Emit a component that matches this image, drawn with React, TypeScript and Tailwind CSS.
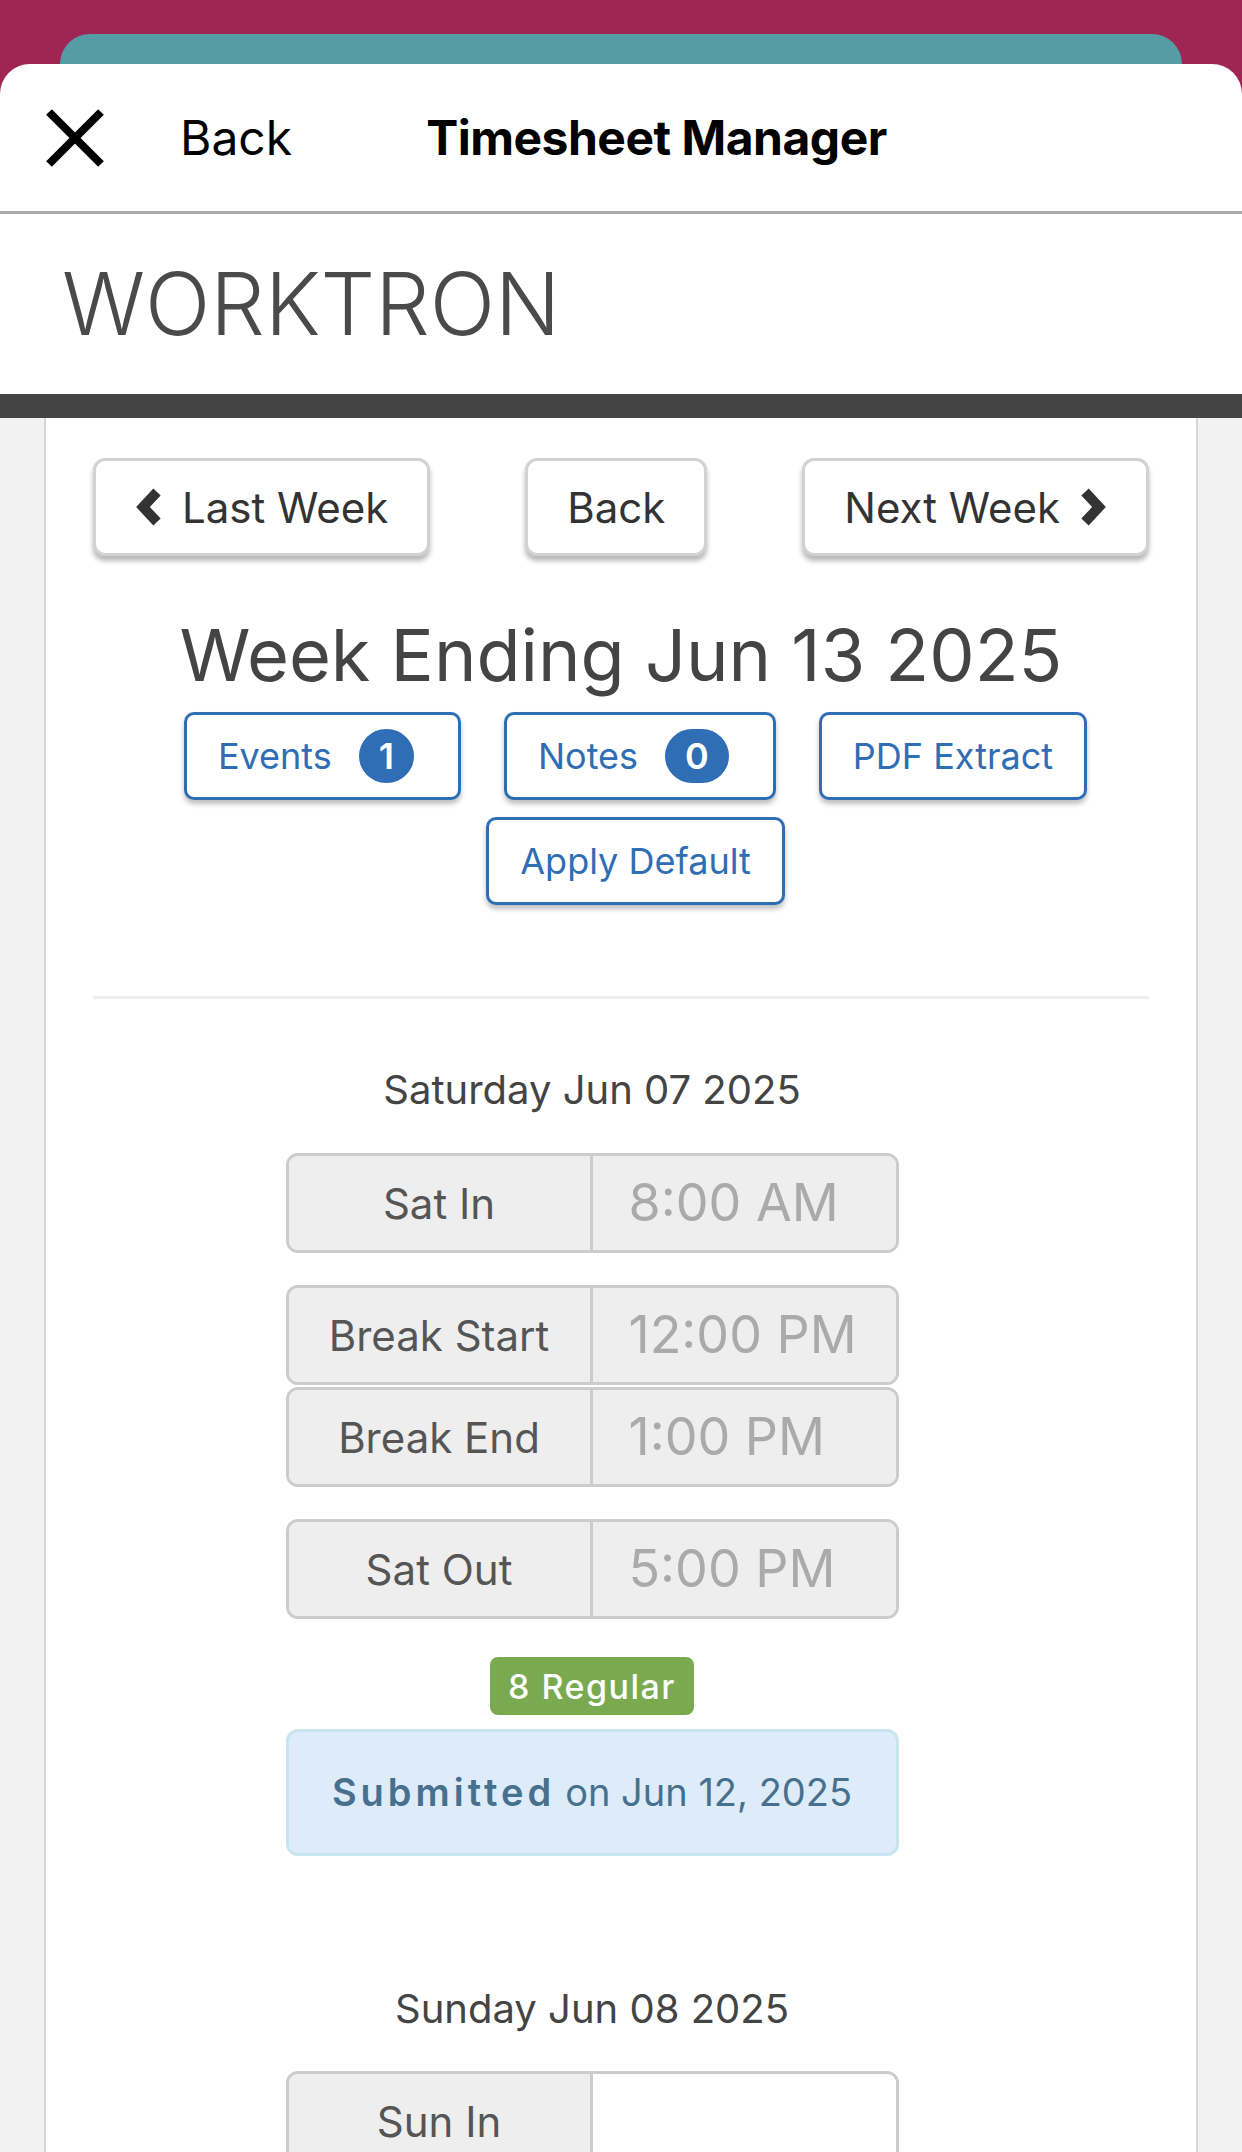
const rows = [
  { label: 'Sat In', value: '8:00 AM', gap: false },
  { label: 'Break Start', value: '12:00 PM', gap: true },
  { label: 'Break End', value: '1:00 PM', gap: false },
  { label: 'Sat Out', value: '5:00 PM', gap: true },
]

function Chevron({ dir }: { dir: 'left' | 'right' }) {
  return (
    <svg width="28" height="40" viewBox="0 0 28 40" className="shrink-0">
      <path
        d={dir === 'left' ? 'M22 5 L8 20 L22 35' : 'M6 5 L20 20 L6 35'}
        fill="none"
        stroke="#333333"
        strokeWidth="10"
        strokeLinejoin="miter"
      />
    </svg>
  )
}

function TimeRow({ label, value, blank }: { label: string; value?: string; blank?: boolean }) {
  return (
    <div className="flex h-[100px] w-[613px] shrink-0 overflow-hidden rounded-[12px] border-[3px] border-[#cccccc]">
      <div className="flex w-[304px] items-center justify-center border-r-[3px] border-[#cccccc] bg-[#eeeeee] text-[42px] text-[#555555]">
        {label}
      </div>
      <div className={`flex flex-1 items-center pl-[36px] text-[52px] text-[#aaaaaa] ${blank ? 'bg-white' : 'bg-[#eeeeee]'}`}>
        {value}
      </div>
    </div>
  )
}

function NavButton({ children }: { children: React.ReactNode }) {
  return (
    <button className="flex h-[98px] items-center gap-[19px] rounded-[12px] border-[3px] border-[#d2d2d2] bg-white px-[39px] text-[42px] text-[#333333] shadow-[0_5px_5px_rgba(0,0,0,0.28)]">
      {children}
    </button>
  )
}

function BlueButton({ label, count }: { label: string; count?: number }) {
  return (
    <button
      className={`flex h-[88px] items-center gap-[27px] rounded-[10px] border-[3px] border-[#2f6db5] bg-white pl-[31px] text-[36px] text-[#2f6db5] shadow-[0_4px_5px_rgba(0,0,0,0.25)] ${count === undefined ? 'pr-[31px]' : 'pr-[44px]'}`}
    >
      {label}
      {count !== undefined && (
        <span className="flex h-[54px] items-center justify-center rounded-full bg-[#2f6db5] px-[20px] text-[36px] font-semibold text-white">
          {count}
        </span>
      )}
    </button>
  )
}

export default function App() {
  return (
    <div className="h-[2152px] overflow-hidden bg-[#9f2653] pt-[34px] [font-family:Inter,sans-serif]">
      {/* stacked sheet behind */}
      <div className="mx-[60px] h-[30px] rounded-t-[30px] bg-[#559ca5]" />

      <div className="flex h-full flex-col rounded-t-[30px] bg-white">
        {/* modal header */}
        <div className="flex h-[147px] shrink-0 items-center pl-[45px] text-black">
          <svg width="60" height="60" viewBox="0 0 60 60" className="shrink-0">
            <path d="M4 4 L56 56 M56 4 L4 56" stroke="#000" strokeWidth="8" />
          </svg>
          <span className="ml-[75px] text-[48px]">Back</span>
          <span className="ml-[134px] text-[48px] font-bold tracking-[-0.5px]">Timesheet Manager</span>
        </div>
        <div className="h-[3px] shrink-0 bg-[#aaaaaa]" />

        <div className="flex h-[180px] shrink-0 items-center pl-[62px] text-[86px] font-light leading-none text-[#4a4a4a]">
          WORKTRON
        </div>
        <div className="h-[24px] shrink-0 bg-[#444444]" />

        <div className="flex-1 bg-[#f2f2f2]">
          <div className="mx-[44px] h-full border-x-[2px] border-[#d6d6d6] bg-white px-[47px] pt-[40px]">
            <div className="flex justify-between">
              <NavButton>
                <Chevron dir="left" />
                Last Week
              </NavButton>
              <NavButton>Back</NavButton>
              <NavButton>
                Next Week
                <Chevron dir="right" />
              </NavButton>
            </div>

            <h1 className="mt-[54px] text-center text-[72px] leading-[90px] text-[#444444]">
              Week Ending Jun 13 2025
            </h1>

            <div className="mt-[12px] flex justify-center gap-[43px] pl-[29px]">
              <BlueButton label="Events" count={1} />
              <BlueButton label="Notes" count={0} />
              <BlueButton label="PDF Extract" />
            </div>
            <div className="mt-[17px] flex justify-center pl-[29px]">
              <BlueButton label="Apply Default" />
            </div>

            <div className="mt-[91px] h-[3px] bg-[#eeeeee]" />

            <div className="flex flex-col items-center pr-[58px]">
              <div className="mt-[61px] text-[40px] leading-[60px] text-[#444444]">Saturday Jun 07 2025</div>

              <div className="mt-[33px] flex flex-col items-center">
                {rows.map((r) => (
                  <div key={r.label} className={r.label === 'Sat In' ? '' : r.gap ? 'mt-[32px]' : 'mt-[2px]'}>
                    <TimeRow label={r.label} value={r.value} />
                  </div>
                ))}
              </div>

              <span className="mt-[38px] flex h-[58px] items-center rounded-[8px] bg-[#7aaa4f] px-[18px] text-[34px] font-medium tracking-[1.5px] text-white">
                8 Regular
              </span>

              <div className="mt-[14px] flex h-[127px] w-[613px] items-center justify-center rounded-[12px] border-[3px] border-[#c8e4ef] bg-[#ddecf8] text-[38px] text-[#47708f]">
                <span className="font-semibold tracking-[4px]">Submitted</span>
                <span className="ml-[10px]">on Jun 12, 2025</span>
              </div>

              <div className="mt-[123px] text-[40px] leading-[60px] text-[#444444]">Sunday Jun 08 2025</div>

              <div className="mt-[32px]">
                <TimeRow label="Sun In" blank />
              </div>
            </div>
          </div>
        </div>
      </div>
    </div>
  )
}
